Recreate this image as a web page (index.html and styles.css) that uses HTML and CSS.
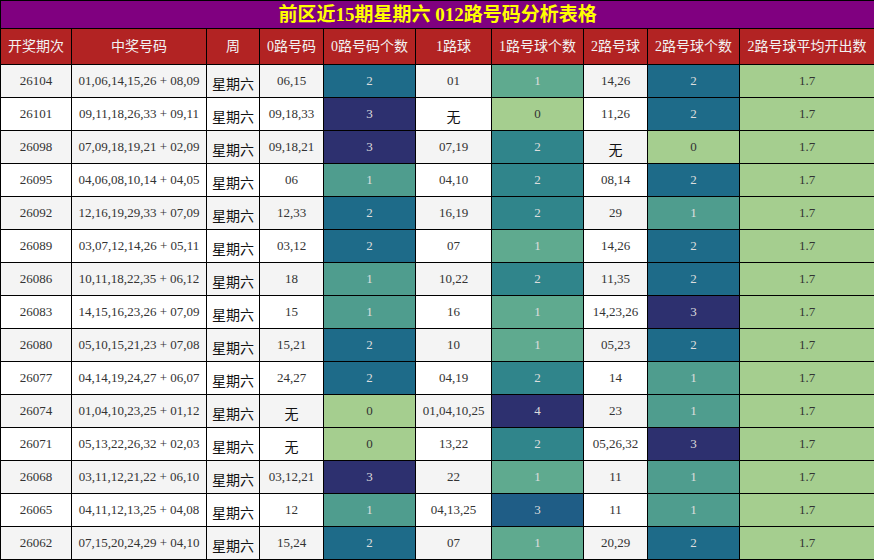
FILE: index.html
```html
<!DOCTYPE html>
<html lang="zh">
<head>
<meta charset="utf-8">
<title>前区近15期星期六 012路号码分析表格</title>
<link rel="stylesheet" href="styles.css">
</head>
<body>
<table class="grid">
<colgroup>
<col class="w1"><col class="w2"><col class="w3"><col class="w4"><col class="w5"><col class="w6"><col class="w7"><col class="w8"><col class="w9"><col class="w10">
</colgroup>
<thead>
<tr class="title-row"><th colspan="10" class="title">前区近15期星期六 012路号码分析表格</th></tr>
<tr class="head-row">
<th>开奖期次</th><th>中奖号码</th><th>周</th><th>0路号码</th><th>0路号码个数</th><th>1路球</th><th>1路号球个数</th><th>2路号球</th><th>2路号球个数</th><th>2路号球平均开出数</th>
</tr>
</thead>
<tbody>
<tr class="alt"><td>26104</td><td>01,06,14,15,26 + 08,09</td><td class="cjk">星期六</td><td>06,15</td><td class="c2">2</td><td>01</td><td class="d1">1</td><td>14,26</td><td class="c2">2</td><td class="avg">1.7</td></tr>
<tr><td>26101</td><td>09,11,18,26,33 + 09,11</td><td class="cjk">星期六</td><td>09,18,33</td><td class="c3">3</td><td class="cjk">无</td><td class="c0">0</td><td>11,26</td><td class="c2">2</td><td class="avg">1.7</td></tr>
<tr class="alt"><td>26098</td><td>07,09,18,19,21 + 02,09</td><td class="cjk">星期六</td><td>09,18,21</td><td class="c3">3</td><td>07,19</td><td class="d2">2</td><td class="cjk">无</td><td class="c0">0</td><td class="avg">1.7</td></tr>
<tr><td>26095</td><td>04,06,08,10,14 + 04,05</td><td class="cjk">星期六</td><td>06</td><td class="c1">1</td><td>04,10</td><td class="d2">2</td><td>08,14</td><td class="c2">2</td><td class="avg">1.7</td></tr>
<tr class="alt"><td>26092</td><td>12,16,19,29,33 + 07,09</td><td class="cjk">星期六</td><td>12,33</td><td class="c2">2</td><td>16,19</td><td class="d2">2</td><td>29</td><td class="c1">1</td><td class="avg">1.7</td></tr>
<tr><td>26089</td><td>03,07,12,14,26 + 05,11</td><td class="cjk">星期六</td><td>03,12</td><td class="c2">2</td><td>07</td><td class="d1">1</td><td>14,26</td><td class="c2">2</td><td class="avg">1.7</td></tr>
<tr class="alt"><td>26086</td><td>10,11,18,22,35 + 06,12</td><td class="cjk">星期六</td><td>18</td><td class="c1">1</td><td>10,22</td><td class="d2">2</td><td>11,35</td><td class="c2">2</td><td class="avg">1.7</td></tr>
<tr><td>26083</td><td>14,15,16,23,26 + 07,09</td><td class="cjk">星期六</td><td>15</td><td class="c1">1</td><td>16</td><td class="d1">1</td><td>14,23,26</td><td class="c3">3</td><td class="avg">1.7</td></tr>
<tr class="alt"><td>26080</td><td>05,10,15,21,23 + 07,08</td><td class="cjk">星期六</td><td>15,21</td><td class="c2">2</td><td>10</td><td class="d1">1</td><td>05,23</td><td class="c2">2</td><td class="avg">1.7</td></tr>
<tr><td>26077</td><td>04,14,19,24,27 + 06,07</td><td class="cjk">星期六</td><td>24,27</td><td class="c2">2</td><td>04,19</td><td class="d2">2</td><td>14</td><td class="c1">1</td><td class="avg">1.7</td></tr>
<tr class="alt"><td>26074</td><td>01,04,10,23,25 + 01,12</td><td class="cjk">星期六</td><td class="cjk">无</td><td class="c0">0</td><td>01,04,10,25</td><td class="d4">4</td><td>23</td><td class="c1">1</td><td class="avg">1.7</td></tr>
<tr><td>26071</td><td>05,13,22,26,32 + 02,03</td><td class="cjk">星期六</td><td class="cjk">无</td><td class="c0">0</td><td>13,22</td><td class="d2">2</td><td>05,26,32</td><td class="c3">3</td><td class="avg">1.7</td></tr>
<tr class="alt"><td>26068</td><td>03,11,12,21,22 + 06,10</td><td class="cjk">星期六</td><td>03,12,21</td><td class="c3">3</td><td>22</td><td class="d1">1</td><td>11</td><td class="c1">1</td><td class="avg">1.7</td></tr>
<tr><td>26065</td><td>04,11,12,13,25 + 04,08</td><td class="cjk">星期六</td><td>12</td><td class="c1">1</td><td>04,13,25</td><td class="d3">3</td><td>11</td><td class="c1">1</td><td class="avg">1.7</td></tr>
<tr class="alt"><td>26062</td><td>07,15,20,24,29 + 04,10</td><td class="cjk">星期六</td><td>15,24</td><td class="c2">2</td><td>07</td><td class="d1">1</td><td>20,29</td><td class="c2">2</td><td class="avg">1.7</td></tr>
</tbody>
</table>
</body>
</html>
```
FILE: styles.css
```css
html, body {
  margin: 0;
  padding: 0;
  background: #ffffff;
}
body {
  font-family: "Liberation Serif", "Noto Sans CJK SC", serif;
  font-size: 13px;
  color: #333333;
}
.grid {
  border-collapse: collapse;
  table-layout: fixed;
  width: 874px;
}
.w1 { width: 71px; }
.w2 { width: 135px; }
.w3 { width: 53px; }
.w4 { width: 64px; }
.w5 { width: 92px; }
.w6 { width: 76px; }
.w7 { width: 92px; }
.w8 { width: 64px; }
.w9 { width: 92px; }
.w10 { width: 135px; }
.grid th, .grid td {
  border: 1px solid #000000;
  padding: 0;
  text-align: center;
  white-space: nowrap;
  overflow: hidden;
}
.title-row th {
  height: 27px;
  background: #800080;
  color: #ffff00;
  font-family: "Liberation Serif", "Noto Sans CJK SC", serif;
  font-weight: bold;
  font-size: 19px;
  line-height: 20px;
}
.head-row th {
  height: 35px;
  background: #b22323;
  color: #f2f2f2;
  font-weight: normal;
  font-size: 14px;
  line-height: 18px;
  font-family: "Liberation Serif", "Noto Sans CJK SC", serif;
}
.grid td {
  height: 32px;
  line-height: 16px;
}
tbody tr { background: #ffffff; }
tbody tr.alt { background: #f4f4f4; }
.grid td.cjk {
  font-family: "Noto Sans CJK SC", sans-serif;
  font-size: 14px;
  color: #111111;
  line-height: 16px;
  padding-top: 4px;
  height: 28px;
}
.c0 { background: #a5ce8f; color: #333333; }
.c1 { background: #4f9d8e; color: #dddddd; }
.c2 { background: #1e6b89; color: #dddddd; }
.c3 { background: #2d306f; color: #dddddd; }
.d1 { background: #5faa8f; color: #dddddd; }
.d2 { background: #30858b; color: #dddddd; }
.d3 { background: #1f5d86; color: #dddddd; }
.d4 { background: #2d306f; color: #dddddd; }
.avg { background: #a5ce8f; color: #333333; }
```
